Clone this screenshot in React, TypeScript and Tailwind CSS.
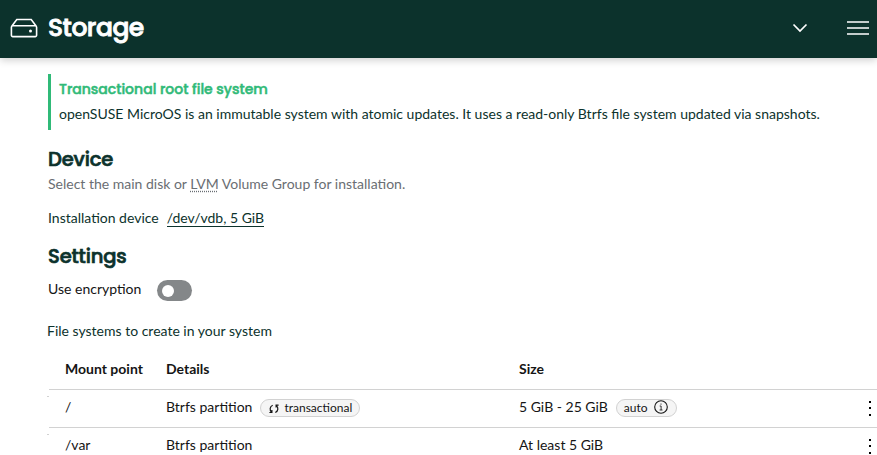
import type { ReactNode } from "react";

const heading = "font-['Poppins','Inter',sans-serif] font-medium";

function Badge({ children, className = "" }: { children: ReactNode; className?: string }) {
  return (
    <span className={`mt-px flex h-[18px] items-center rounded-full border border-[#d2d2d2] bg-[#f5f5f5] text-xs text-[#151515] ${className}`}>
      {children}
    </span>
  );
}

function Kebab() {
  return (
    <button className="mt-0.5 ml-auto flex h-[15px] w-2 flex-col items-center justify-between text-black" aria-label="Actions">
      <span className="size-0.5 bg-current" />
      <span className="size-0.5 bg-current" />
      <span className="size-0.5 bg-current" />
    </button>
  );
}

function Row({ mount, details, size }: { mount: string; details: ReactNode; size: ReactNode }) {
  return (
    <div className="relative flex h-[38px] items-center border-t border-[#d2d2d2] pr-[3px] pb-[3px] pl-4 text-[#151515]">
      <span className="absolute top-[6px] -left-[2px] h-px w-[2px] bg-[#d2d2d2]" />
      <div className="w-[101px]">{mount}</div>
      <div className="flex w-[353px] items-center gap-2">{details}</div>
      <div className="flex items-center gap-2">{size}</div>
      <Kebab />
    </div>
  );
}

export default function App() {
  return (
    <div className="h-[455px] overflow-hidden bg-white font-['Lato',sans-serif] text-sm leading-5 text-[#0c322c] antialiased">
      <header className="flex h-[58px] items-center bg-[#0c322c] pr-2 pb-[2px] pl-2 text-white shadow-[0_2px_8px_rgba(3,3,3,0.2)]">
        <svg className="size-8" viewBox="0 0 32 32" fill="none" stroke="currentColor" strokeWidth="1.6">
          <path d="M3.7 14.3 8.8 7.5h14.4l5.1 6.8M4.8 13.8h22.4a1.4 1.4 0 0 1 1.4 1.4v8a1.4 1.4 0 0 1-1.4 1.4H4.8a1.4 1.4 0 0 1-1.4-1.4v-8a1.4 1.4 0 0 1 1.4-1.4Z" />
          <circle cx="22.5" cy="18.9" r="1.5" fill="currentColor" stroke="none" />
        </svg>
        <h1 className={`${heading} ml-2 flex-1 text-[25px] leading-8 tracking-[-0.5px] [-webkit-text-stroke:0.8px_currentColor]`}>Storage</h1>
        <svg className="mr-[39px] h-4 w-4" viewBox="0 0 16 16" fill="none" stroke="currentColor" strokeWidth="1.7">
          <path d="m1.5 4.5 6.5 6.5 6.5-6.5" />
        </svg>
        <svg className="h-4 w-[22px]" viewBox="0 0 22 16" fill="none" stroke="currentColor" strokeWidth="1.7">
          <path d="M0 2h22M0 8h22M0 14h22" />
        </svg>
      </header>
      <main className="pt-4 pl-12">
        <section className="h-14 border-l-[3px] border-[#30ba78] pt-[5px] pl-2">
          <h4 className={`${heading} h-[21px] text-[#30ba78] [-webkit-text-stroke:0.5px_currentColor]`}>
            Transactional root file system
          </h4>
          <p className="mt-1 whitespace-nowrap">
            openSUSE MicroOS is an immutable system with atomic updates. It uses a read-only Btrfs file system updated via snapshots.
          </p>
        </section>
        <section className="pt-4">
          <h2 className={`${heading} text-[19.5px] leading-7 tracking-[-0.15px] [-webkit-text-stroke:0.7px_currentColor]`}>Device</h2>
          <p className="text-[#6a6e73]">
            Select the main disk or <abbr className="underline decoration-dotted underline-offset-2">LVM</abbr> Volume Group for installation.
          </p>
          <div className="mt-[14px] flex gap-2">
            <span>Installation device</span>
            <button className="h-[19px] border-b border-[#0c322c]">/dev/vdb, 5 GiB</button>
          </div>
        </section>
        <section className="pt-[15px]">
          <h2 className={`${heading} text-[19.5px] leading-7 tracking-[-0.15px] [-webkit-text-stroke:0.7px_currentColor]`}>Settings</h2>
          <div className="mt-[9px] flex h-[21px] gap-4 text-[#151515]">
            <span className="-mt-px">Use encryption</span>
            <button className="flex h-[21px] w-[35px] items-center rounded-full bg-[#848789] pl-[5px]" role="switch" aria-checked="false">
              <span className="size-3 rounded-full bg-white" />
            </button>
          </div>
          <p className="mt-5 -ml-px">File systems to create in your system</p>
        </section>
        <section className="ml-px pt-2">
          <div className="flex h-10 items-center pl-4 font-bold text-[#151515]">
            <div className="w-[101px]">Mount point</div>
            <div className="w-[353px]">Details</div>
            <div>Size</div>
          </div>
          <Row
            mount="/"
            details={<>
              <span>Btrfs partition</span>
              <Badge className="gap-1 px-[7px]">
                <svg className="mt-0.5 size-3" viewBox="0 0 12 12" fill="none" stroke="currentColor" strokeWidth="1.2">
                  <path d="M4.7 2.2C1.7 3.4 1.4 7 3.5 9.1M1.4 9.5h2.5V7.1M7.3 9.5c3-1.2 3.3-4.8 1.2-6.9M10.6 2.2H8.1v2.4" />
                </svg>
                <span>transactional</span>
              </Badge>
            </>}
            size={<>
              <span>5 GiB - 25 GiB</span>
              <Badge className="gap-[6px] pr-2 pl-[7px]">
                <span>auto</span>
                <svg className="-mt-0.5 size-[14px]" viewBox="0 0 14 14" fill="none" stroke="currentColor">
                  <circle cx="7" cy="7" r="6.3" strokeWidth="1.1" />
                  <path d="M5.7 6h1.4v4M5.6 10h2.9M7 3.5v1.2" strokeWidth="0.85" />
                </svg>
              </Badge>
            </>}
          />
          <Row mount="/var" details="Btrfs partition" size="At least 5 GiB" />
        </section>
      </main>
    </div>
  );
}
